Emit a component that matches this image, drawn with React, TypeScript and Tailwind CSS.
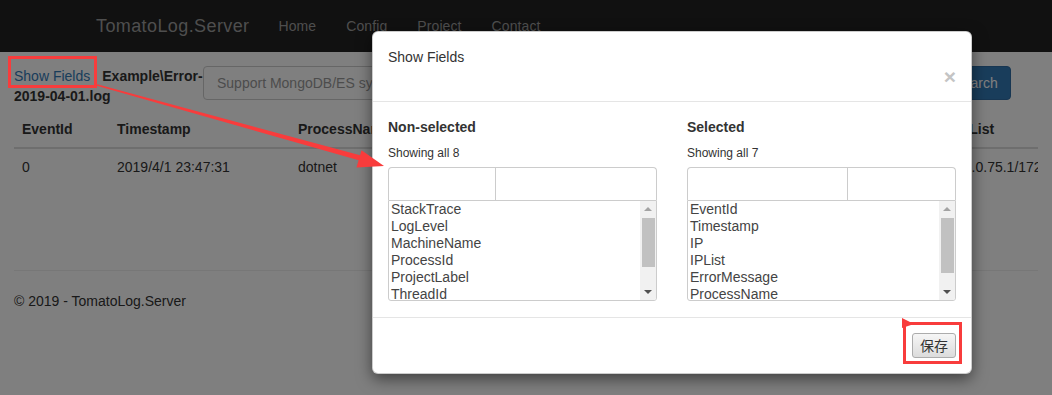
import { ReactNode } from 'react'

const navLinks = ['Home', 'Config', 'Project', 'Contact']

const nonSelected = ['StackTrace', 'LogLevel', 'MachineName', 'ProcessId', 'ProjectLabel', 'ThreadId', 'Version', 'Extra']
const selected = ['EventId', 'Timestamp', 'IP', 'IPList', 'ErrorMessage', 'ProcessName', 'Message']

const cols = 'grid grid-cols-[95px_181px_250px_408px_1fr]'

const FieldList = ({ items, thumb }: { items: string[]; thumb: string }) => (
  <div className="flex h-[101px] overflow-hidden rounded-b-[3px] border border-[#ccc] bg-white">
    <div className="flex-1 overflow-hidden pl-[2px] text-[14px] leading-[17px] text-[#444]">
      {items.map((item) => (
        <div key={item} className="whitespace-nowrap">
          {item}
        </div>
      ))}
    </div>
    <div className="flex w-[16px] flex-col items-center bg-[#f1f1f1]">
      <div className="flex h-[16px] items-center justify-center">
        <div className="h-0 w-0 border-x-[4px] border-b-[4px] border-x-transparent border-b-[#a3a3a3]" />
      </div>
      <div className={`mt-[1px] w-[13px] bg-[#c1c1c1] ${thumb}`} />
      <div className="flex-1" />
      <div className="flex h-[16px] items-center justify-center">
        <div className="h-0 w-0 border-x-[4px] border-t-[4px] border-x-transparent border-t-[#505050]" />
      </div>
    </div>
  </div>
)

const Column = ({
  title,
  items,
  split,
  thumb,
}: {
  title: string
  items: string[]
  split: string
  thumb: string
}) => (
  <div>
    <div className="text-[14px] font-bold leading-[20px] text-[#333]">{title}</div>
    <div className="mt-[8px] text-[12px] leading-[17px] text-[#333]">Showing all {items.length}</div>
    <div className="mt-[5px] flex h-[33px] rounded-t-[4px] border border-b-0 border-[#ccc]">
      <div className={`${split} border-r border-[#ccc]`} />
      <div className="flex-1" />
    </div>
    <FieldList items={items} thumb={thumb} />
  </div>
)

const Cell = ({ children, bold }: { children: ReactNode; bold?: boolean }) => (
  <div className={`overflow-hidden whitespace-nowrap px-[8px] py-[8px] leading-[20px] ${bold ? 'font-bold' : ''}`}>
    {children}
  </div>
)

export default function App() {
  return (
    <div className="relative h-[395px] w-[1052px] overflow-hidden bg-white font-['Liberation_Sans',Arial,sans-serif] text-[14px] text-[#333]">
      <nav className="flex h-[52px] items-center bg-[#222] pl-[96px]">
        <span className="pr-[14px] text-[18px] tracking-[0.4px] text-[#9d9d9d]">TomatoLog.Server</span>
        {navLinks.map((link) => (
          <a key={link} href="#" className="px-[15px] tracking-[0.1px] text-[#9d9d9d]">
            {link}
          </a>
        ))}
      </nav>

      <main className="px-[14px]">
        <div className="flex items-start pt-[14px]">
          <div className="w-[189px] whitespace-nowrap leading-[20px]">
            <a href="#" className="text-[#337ab7]">
              Show Fields
            </a>
            <b className="ml-[12px]">Example\Error-</b>
            <br />
            <b>2019-04-01.log</b>
          </div>
          <div className="flex h-[34px] w-[727px] items-center rounded-[4px] border border-[#ccc] px-[13px] text-[#999]">
            Support MongoDB/ES syntax
          </div>
          <button className="ml-[10px] h-[34px] w-[71px] rounded-[4px] border border-[#2e6da4] bg-[#337ab7] text-white">
            Search
          </button>
        </div>

        <div className="mt-[5px]">
          <div className={`${cols} border-b-2 border-[#ddd]`}>
            <Cell bold>EventId</Cell>
            <Cell bold>Timestamp</Cell>
            <Cell bold>ProcessName</Cell>
            <Cell bold>ErrorMessage</Cell>
            <Cell bold>IPList</Cell>
          </div>
          <div className={cols}>
            <Cell>0</Cell>
            <Cell>2019/4/1 23:47:31</Cell>
            <Cell>dotnet</Cell>
            <Cell>Attempted to divide by zero.</Cell>
            <Cell>10.0.75.1/172.17.0.1</Cell>
          </div>
        </div>

        <footer className="mt-[85px] border-t border-[#eee] pt-[20px] leading-[20px]">© 2019 - TomatoLog.Server</footer>
      </main>

      <div className="absolute inset-0 bg-black/50" />

      <div className="absolute left-[372px] top-[31px] w-[600px] rounded-[6px] border border-black/20 bg-white shadow-[0_5px_15px_rgba(0,0,0,0.5)]">
        <div className="border-b border-[#e5e5e5] px-[15px] pb-[16px] pt-[15px]">
          <div className="leading-[20px] text-[#333]">Show Fields</div>
          <div className="flex h-[18px] items-center justify-end">
            <span className="text-[21px] font-bold leading-none text-[#c4c4c4]">×</span>
          </div>
        </div>
        <div className="grid grid-cols-2 gap-[30px] border-b border-[#e5e5e5] px-[15px] pb-[16px] pt-[15px]">
          <Column title="Non-selected" items={nonSelected} split="w-[107px]" thumb="h-[49px]" />
          <Column title="Selected" items={selected} split="w-[160px]" thumb="h-[55px]" />
        </div>
        <div className="flex justify-end p-[15px]">
          <button className="h-[25px] w-[44px] rounded-[3px] border border-[#acacac] bg-gradient-to-b from-[#f6f6f6] to-[#dcdcdc] font-['Liberation_Sans','Noto_Sans_CJK_SC',sans-serif] text-[14px] leading-none text-[#333]">
            保存
          </button>
        </div>
      </div>

      <svg className="pointer-events-none absolute inset-0" width="1052" height="395" viewBox="0 0 1052 395">
        <rect x="9.5" y="57.5" width="86" height="29" fill="none" stroke="#f83c3c" strokeWidth="3" />
        <polygon points="97.2,84.2 361,155.6 359.6,160.4 96.8,85.8" fill="#f83c3c" />
        <polygon points="384,166 361.5,150.2 356.5,167.6" fill="#f83c3c" />
        <rect x="904.5" y="323.5" width="56" height="39" fill="none" stroke="#f83c3c" strokeWidth="3" />
        <polygon points="902,318 914,324 902,328" fill="#f83c3c" />
      </svg>
    </div>
  )
}
